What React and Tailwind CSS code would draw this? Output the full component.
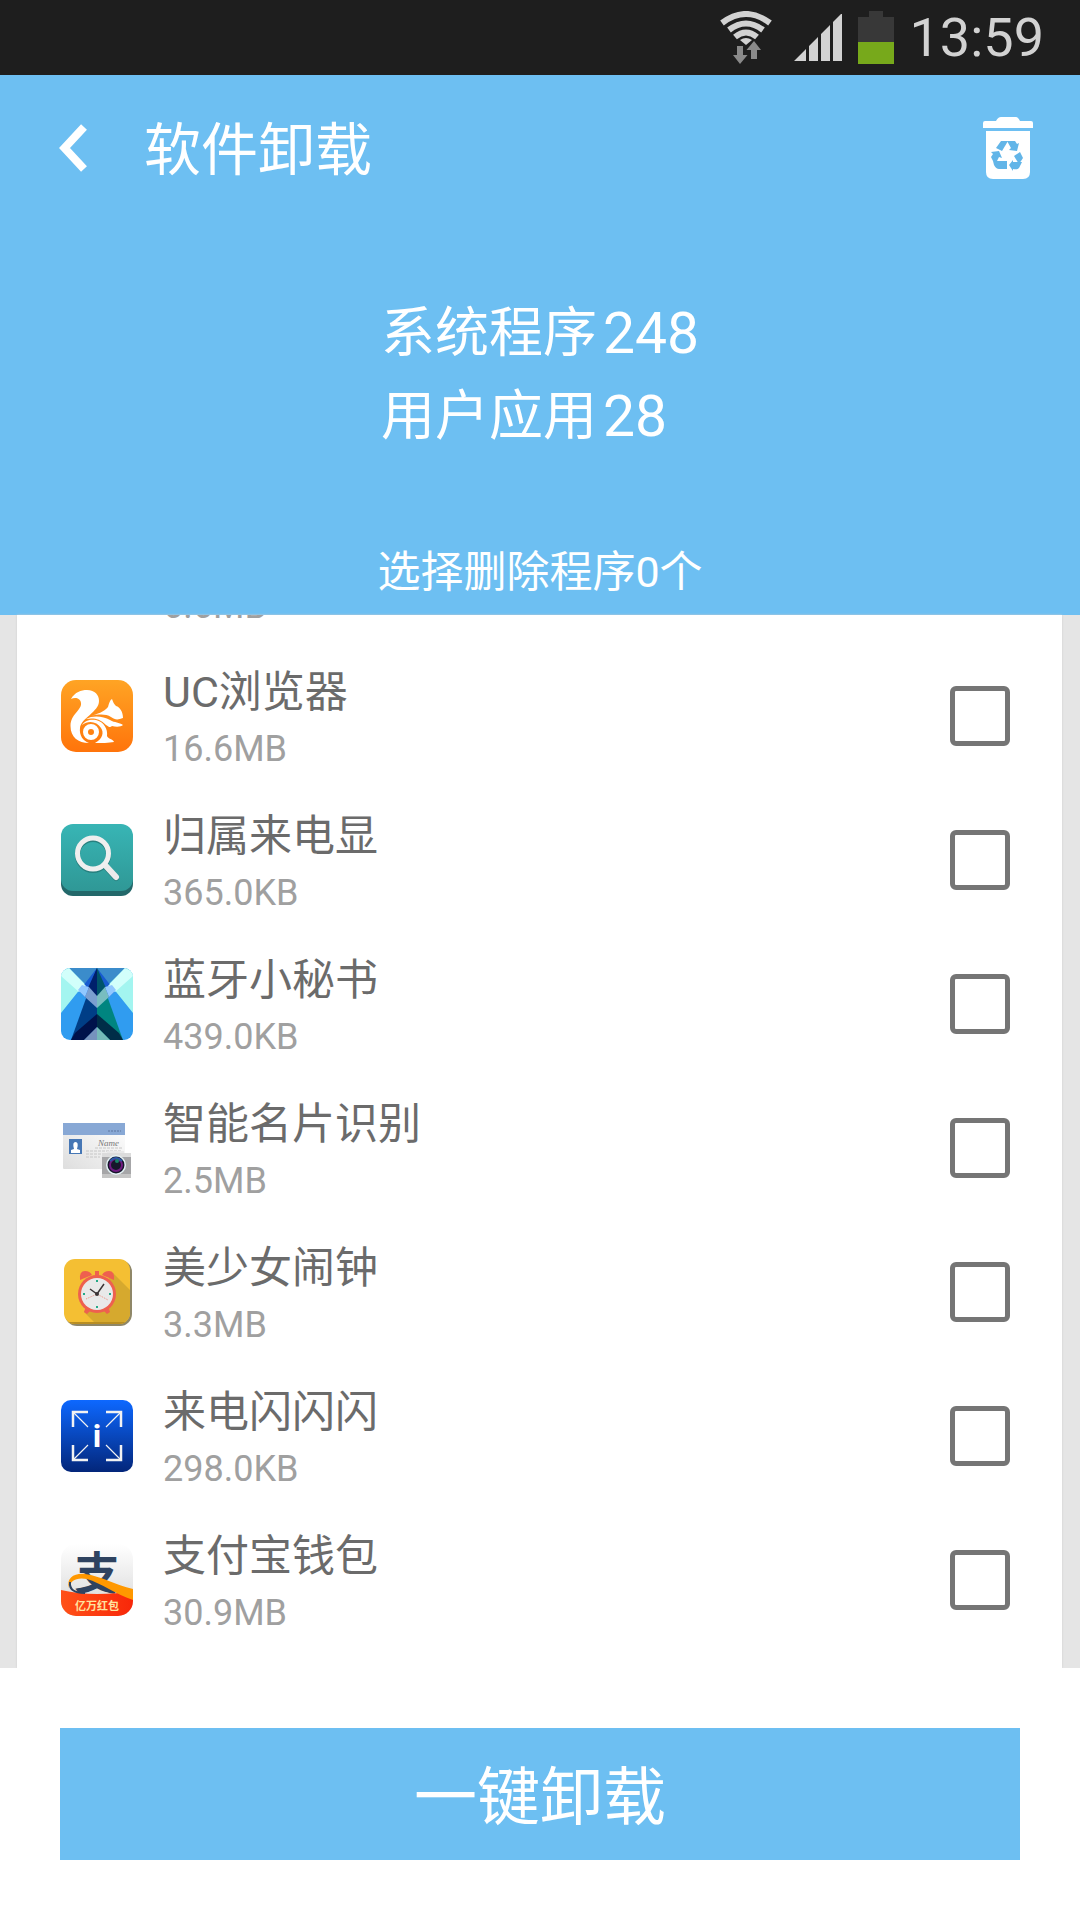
import React, { useState } from "react";

function WifiIcon() {
  return (
    <svg width="52" height="54" viewBox="0 0 52 54" aria-hidden="true">
      <g fill="none" stroke="#d2d2d2" strokeWidth="6">
        <path d="M2 12 Q26 -6 50 12" />
        <path d="M9 19 Q26 6 43 19" />
        <path d="M15 26 Q26 17 37 26" />
      </g>
      <path d="M20 29 Q26 25 32 29 L26 34 Z" fill="#d2d2d2" />
      <path d="M17 35 H23 V44 H27.500 L20 53 L13 44 H17 Z" fill="#8a8a8a" />
      <path d="M31 48 H37 V39 H41 L34 30 L26.500 39 H31 Z" fill="#8a8a8a" />
    </svg>
  );
}

function SignalIcon() {
  return (
    <svg width="48" height="48" viewBox="0 0 48 48" fill="#d2d2d2" aria-hidden="true">
      <path d="M0 47 L12 35 V47 Z M15 32 L24 23 V47 H15 Z M27 20 L36 11 V47 H27 Z M39 8 L48 -1 V47 H39 Z" />
    </svg>
  );
}

function BatteryIcon() {
  return (
    <svg width="36" height="53" viewBox="0 0 36 53" aria-hidden="true">
      <path d="M11 0 H25 V6 H36 V31 H0 V6 H11 Z" fill="#383838" />
      <rect y="31" width="36" height="22" fill="#77a91b" />
    </svg>
  );
}

function BackIcon() {
  return (
    <svg width="28" height="48" viewBox="0 0 28 48" fill="none" stroke="#fff" strokeWidth="8" aria-hidden="true">
      <path d="M25 3 L5.500 24 L25 45" />
    </svg>
  );
}

function TrashIcon() {
  return (
    <svg width="50" height="62" viewBox="0 0 50 62" aria-hidden="true">
      <path d="M2 4 H13 Q15 0 18 0 H33 Q35 0 37 4 H48 Q50 4 50 6 V11 H0 V6 Q0 4 2 4 Z" fill="#fff" />
      <path d="M3 14 H47 V55 Q47 62 40 62 H10 Q3 62 3 55 Z" fill="#fff" />
      <g fill="#62b5e8">
        <path d="M18 24 H25 L19 34 L13 31 Z" />
        <path d="M24 24 H32 L34 27 L36 26 L34 34 L26 33 L28 31 Z" />
        <path d="M31 39 L37 35 L40 41 L36 47 Q34 44 31 39 Z" />
        <path d="M26 48 L30 43 V45 H39 L36 51 Q34 53 30 52 V54 Z" />
        <path d="M10 44 H24 V52 H16 Q13 52 11 48 Z" />
        <path d="M8 35 L16 34 L19 41 L16 40 L14 44 H10 L8 40 L10 37 Z" />
      </g>
    </svg>
  );
}

function UcIcon() {
  return (
    <svg width="72" height="72" viewBox="0 0 72 72" aria-hidden="true">
      <defs>
        <linearGradient id="uc" x1="0" y1="0" x2="0" y2="1">
          <stop offset="0" stopColor="#ffa424" />
          <stop offset="1" stopColor="#ff740b" />
        </linearGradient>
      </defs>
      <rect width="72" height="72" rx="15" fill="url(#uc)" />
      <g fill="#fff">
        <path d="M10 19 C14 12 20 10 26 10 C34 10 38 15 38 21 C38 32 20 38 19 48 C18 55 22 61 28 63 C17 63 9.500 57 9.500 46 C9.500 34 21 30 20 23 C19.500 18 14 17 10 19 Z" />
        <path d="M30 36 C36 34 43 32 47 27 C48 23 49 20 51 19 C52 22 53 24 55 26 C59 27 62 32 62 38 C57 40 54 40 50 37 C45 34 38 34 30 36 Z" />
        <path d="M25 39 C32 35 42 36 49 40 C54 43 58 42 62 45 C60 47 55 47 51 46 C49 48 48 47 45 45 C38 38 32 38 25 39 Z" />
      </g>
      <path d="M21 45 C24 40 30 39 35 40 C43 42 47 49 46 56 C47 59 52 59 53 62 C48 63 40 63 34 63 C42 59 43 52 40 48 C36 41 27 40 21 45 Z" fill="#fff" />
      <circle cx="30" cy="52" r="5.500" fill="none" stroke="#fff" strokeWidth="5" />
    </svg>
  );
}

function SearchAppIcon() {
  return (
    <svg width="72" height="72" viewBox="0 0 72 72" aria-hidden="true">
      <defs>
        <linearGradient id="teal" x1="0" y1="0" x2="0" y2="1">
          <stop offset="0" stopColor="#38b5b5" />
          <stop offset="1" stopColor="#2f9896" />
        </linearGradient>
      </defs>
      <rect y="4" width="72" height="68" rx="12" fill="#23686a" />
      <rect width="72" height="67" rx="12" fill="url(#teal)" />
      <g fill="none" strokeLinecap="round">
        <path d="M44 42 L55 54" stroke="#27807f" strokeWidth="6" />
        <circle cx="32" cy="31" r="15.500" stroke="#27807f" strokeWidth="5" />
        <path d="M44 41 L55 53" stroke="#ebebeb" strokeWidth="6" />
        <circle cx="32" cy="29.500" r="15.500" stroke="#efefef" strokeWidth="5" />
      </g>
    </svg>
  );
}

function BluetoothAppIcon() {
  return (
    <svg width="72" height="72" viewBox="0 0 72 72" aria-hidden="true">
      <clipPath id="bt">
        <rect width="72" height="72" rx="9" />
      </clipPath>
      <g clipPath="url(#bt)">
        <rect width="72" height="72" fill="#309cf0" />
        <path d="M0 0 H72 V45 L36 0 L0 45 Z" fill="#a3f5f0" />
        <path d="M8 0 H64 L36 28 Z" fill="#3b8ccb" />
        <path d="M36 0 L18 23 L27 32 Z M36 0 L54 23 L45 32 Z" fill="#175bd0" />
        <path d="M0 4 L8 0 L25 18 L18 24 L0 8 Z M72 4 L64 0 L47 18 L54 24 L72 8 Z" fill="#d2fffb" />
        <path d="M36 0 L10 72 H36 Z" fill="#003e86" />
        <path d="M36 0 L62 72 H36 Z" fill="#008580" />
        <path d="M36 0 L27 20 L36 29 Z" fill="#00206b" />
        <path d="M36 0 L45 20 L36 29 Z" fill="#00546b" />
        <path d="M28 19 L36 28 V40 L24 29 Z" fill="#7b9fd0" />
        <path d="M44 19 L36 28 V40 L48 29 Z" fill="#78bdc0" />
        <path d="M17 22 L21 17 L28 19 L24 29 Z M55 22 L51 17 L44 19 L48 29 Z" fill="#91c8ff" />
        <path d="M36 46 L14 65 L10 72 H23 L36 59 Z" fill="#00124b" />
        <path d="M36 46 L58 65 L62 72 H49 L36 59 Z" fill="#002d48" />
        <path d="M36 59 L23 72 H36 Z" fill="#7693bd" />
        <path d="M36 59 L49 72 H36 Z" fill="#74b9b8" />
      </g>
    </svg>
  );
}

function CardAppIcon() {
  return (
    <svg width="72" height="72" viewBox="0 0 72 72" aria-hidden="true">
      <defs>
        <linearGradient id="card" x1="1" y1="0" x2="0" y2="1">
          <stop offset="0" stopColor="#fff" />
          <stop offset="1" stopColor="#dedede" />
        </linearGradient>
      </defs>
      <rect x="2" y="11" width="62" height="46" rx="1" fill="url(#card)" />
      <rect x="2" y="11" width="62" height="12" fill="#88a8d5" />
      <path d="M47 19 H60" stroke="#5c76a0" strokeWidth="1" strokeDasharray="2 1" />
      <rect x="8" y="27" width="13" height="15" fill="#4677b5" />
      <path d="M10 41 V38 L13 37 Q11 30 14.500 30 Q18 30 16 37 L19 38 V41 Z" fill="#fff" />
      <text x="37" y="34" fontSize="9" fontStyle="italic" fontFamily="Liberation Serif, serif" fill="#777">Name</text>
      <path d="M34 36 H61 M25 39 H60 M25 42 H58 M25 45 H39" stroke="#c6c6c6" strokeWidth="1" strokeDasharray="3 1" />
      <rect x="46" y="39" width="17" height="6" fill="#e8e8e8" />
      <rect x="41" y="42" width="29" height="24" rx="1" fill="#a6a6a8" />
      <rect x="41" y="41" width="29" height="4" fill="#dcdcdc" />
      <rect x="41" y="62" width="29" height="4" fill="#c5c5c5" />
      <circle cx="55" cy="53" r="10" fill="#e4f3f6" />
      <circle cx="55" cy="53" r="8.500" fill="#16162a" />
      <circle cx="55" cy="53" r="6" fill="none" stroke="#711a82" strokeWidth="2" />
      <path d="M49 49 Q55 43 61 49" fill="none" stroke="#2a59a5" strokeWidth="2" />
      <circle cx="56" cy="49" r="2" fill="#178466" />
    </svg>
  );
}

function ClockAppIcon() {
  return (
    <svg width="72" height="72" viewBox="0 0 72 72" aria-hidden="true">
      <clipPath id="clock">
        <rect x="3" y="3" width="66" height="65" rx="11" />
      </clipPath>
      <rect x="4" y="4" width="67" height="66" rx="12" fill="#8f8768" />
      <g clipPath="url(#clock)">
        <rect x="3" y="3" width="66" height="65" fill="#f4bf33" />
        <path d="M52 17 L70 35 V70 H37 L23 56 Z" fill="#d6a92e" />
        <path d="M3 67 H69" stroke="#b98e22" strokeWidth="2" />
      </g>
      <g fill="#ee604f">
        <path d="M19 24 Q18 15 24 15 Q29 15 31 19 Z" />
        <path d="M53 24 Q54 15 48 15 Q43 15 41 19 Z" />
        <path d="M34 15 H38 V21 H34 Z" />
        <path d="M25 50 L29 55 L26 58 L23 56 Z M47 50 L43 55 L46 58 L49 56 Z" />
        <circle cx="36" cy="38" r="19" />
      </g>
      <circle cx="36" cy="38" r="16" fill="#e9e9e9" />
      <path d="M25 43 L36 38 L47 44" fill="none" stroke="#ee8e80" strokeWidth="1" strokeDasharray="1 1" />
      <path d="M29 33 L36 38 L43 28" fill="none" stroke="#3b3436" strokeWidth="1.500" />
      <circle cx="36" cy="38" r="2" fill="#3b3436" />
      <g fill="#24a987">
        <rect x="35" y="24" width="2" height="2" />
        <rect x="35" y="50" width="2" height="2" />
        <rect x="22" y="37" width="2" height="2" />
        <rect x="48" y="37" width="2" height="2" />
      </g>
    </svg>
  );
}

function FlashAppIcon() {
  return (
    <svg width="72" height="72" viewBox="0 0 72 72" aria-hidden="true">
      <defs>
        <linearGradient id="flash" x1="0" y1="0" x2="0" y2="1">
          <stop offset="0" stopColor="#0d68ff" />
          <stop offset="1" stopColor="#03267a" />
        </linearGradient>
      </defs>
      <rect width="72" height="72" rx="10" fill="url(#flash)" />
      <g fill="none" stroke="#f2f2f2">
        <path d="M12 27 V12 H27 M45 12 H60 V27 M12 45 V60 H27 M45 60 H60 V45" strokeWidth="2.500" />
        <path d="M13 13 L27 27 M59 13 L45 27 M13 59 L27 45 M59 59 L45 45" strokeWidth="1.200" />
      </g>
      <text x="36" y="47" textAnchor="middle" fontSize="32" fontWeight="700" fontFamily="Roboto, sans-serif" fill="#fff">i</text>
    </svg>
  );
}

function AlipayIcon() {
  return (
    <svg width="72" height="72" viewBox="0 0 72 72" aria-hidden="true">
      <defs>
        <linearGradient id="pay" x1="0" y1="0" x2="0" y2="1">
          <stop offset="0" stopColor="#fff" />
          <stop offset="1" stopColor="#d5d5d5" />
        </linearGradient>
        <linearGradient id="red" x1="0" y1="0" x2="1" y2="0">
          <stop offset="0" stopColor="#ff5118" />
          <stop offset="1" stopColor="#f82709" />
        </linearGradient>
      </defs>
      <clipPath id="payclip">
        <rect width="72" height="72" rx="15" />
      </clipPath>
      <rect width="72" height="72" rx="15" fill="url(#pay)" />
      <text x="36" y="46" textAnchor="middle" fontSize="45" fontWeight="700" fontFamily="Noto Sans CJK SC, sans-serif" fill="#2f4360">支</text>
      <g clipPath="url(#payclip)">
        <path d="M0 46 Q18 50 36 50 Q56 50 72 47 V72 H0 Z" fill="url(#red)" />
        <path d="M8 44 C5 34 13 29 24 30 C40 32 54 41 72 45 V56 C54 50 40 39 26 35 C15 33 9 37 8 44 Z" fill="#ff9800" />
        <path d="M9 38 C8 46 14 49 24 49" fill="none" stroke="#2f4360" strokeWidth="2" />
      </g>
      <text x="36" y="66" textAnchor="middle" fontSize="11" fontWeight="700" fontFamily="Noto Sans CJK SC, sans-serif" fill="#ffe3a0">亿万红包</text>
    </svg>
  );
}

const apps = [
  { id: "uc", name: "UC浏览器", size: "16.6MB", Icon: UcIcon },
  { id: "caller", name: "归属来电显", size: "365.0KB", Icon: SearchAppIcon },
  { id: "bluetooth", name: "蓝牙小秘书", size: "439.0KB", Icon: BluetoothAppIcon },
  { id: "card", name: "智能名片识别", size: "2.5MB", Icon: CardAppIcon },
  { id: "alarm", name: "美少女闹钟", size: "3.3MB", Icon: ClockAppIcon },
  { id: "flash", name: "来电闪闪闪", size: "298.0KB", Icon: FlashAppIcon },
  { id: "alipay", name: "支付宝钱包", size: "30.9MB", Icon: AlipayIcon },
];

function AppRow({ app, checked, onToggle }) {
  const { Icon } = app;
  return (
    <li className="flex h-36 shrink-0 items-center pr-[52px] pl-11">
      <Icon />
      <label htmlFor={app.id} className="ml-[30px] flex-1 pt-[10px]">
        <span className="block text-[43px] leading-14 text-[#6b6b6b]">{app.name}</span>
        <span className="block text-4xl leading-[58px] text-[#a0a0a0]">{app.size}</span>
      </label>
      <input type="checkbox" id={app.id} checked={checked} onChange={onToggle} className="size-15 appearance-none rounded-md border-5 border-[#757575] bg-white checked:bg-[#6dbff2]" />
    </li>
  );
}

export default function App() {
  const [selected, setSelected] = useState([]);

  const toggle = (id) => {
    setSelected(selected.includes(id) ? selected.filter((item) => item !== id) : [...selected, id]);
  };

  return (
    <div className="flex h-screen flex-col bg-white font-[Roboto,'Noto_Sans_CJK_SC',sans-serif]">
      <div className="flex h-[75px] shrink-0 items-center justify-end bg-[#1e1e1e] pr-9">
        <WifiIcon />
        <div className="ml-[22px]"><SignalIcon /></div>
        <div className="ml-4"><BatteryIcon /></div>
        <span className="ml-4 text-[54px] leading-[75px] text-[#d2d2d2]">13:59</span>
      </div>

      <header className="shrink-0 bg-[#6dbff2] pb-[15px] text-white">
        <div className="flex h-[150px] items-center pr-[47px] pl-[59px]">
          <button type="button" aria-label="返回" className="pb-1"><BackIcon /></button>
          <h1 className="ml-[57px] flex-1 text-[57px] leading-[75px]">软件卸载</h1>
          <button type="button" aria-label="回收站" className="pb-1"><TrashIcon /></button>
        </div>
        <div className="flex justify-center pt-[67px]">
          <div className="text-[54px] leading-[83px]">
            <p className="flex gap-1.5">系统程序<span className="text-[57px]">248</span></p>
            <p className="flex gap-1.5">用户应用<span className="text-[57px]">28</span></p>
          </div>
        </div>
        <p className="mt-[86px] text-center text-[43px] leading-14">选择删除程序{selected.length}个</p>
      </header>

      <main className="flex min-h-0 flex-1 bg-[#e5e5e5] pr-[18px] pl-[17px]">
        <ul className="flex flex-1 flex-col justify-end overflow-hidden bg-white pb-4 shadow-[0_0_2px_#ccc]">
          <li className="flex h-36 shrink-0 items-center pl-[146px]">
            <span className="pt-[68px] text-4xl leading-14 text-[#a0a0a0]">6.6MB</span>
          </li>
          {apps.map((app) => (
            <AppRow key={app.id} app={app} checked={selected.includes(app.id)} onToggle={() => toggle(app.id)} />
          ))}
        </ul>
      </main>

      <footer className="z-10 shrink-0 bg-white p-15">
        <button type="button" className="block w-full bg-[#6dbff2] pt-7 pb-5 text-[63px] leading-[84px] text-white">一键卸载</button>
      </footer>
    </div>
  );
}
